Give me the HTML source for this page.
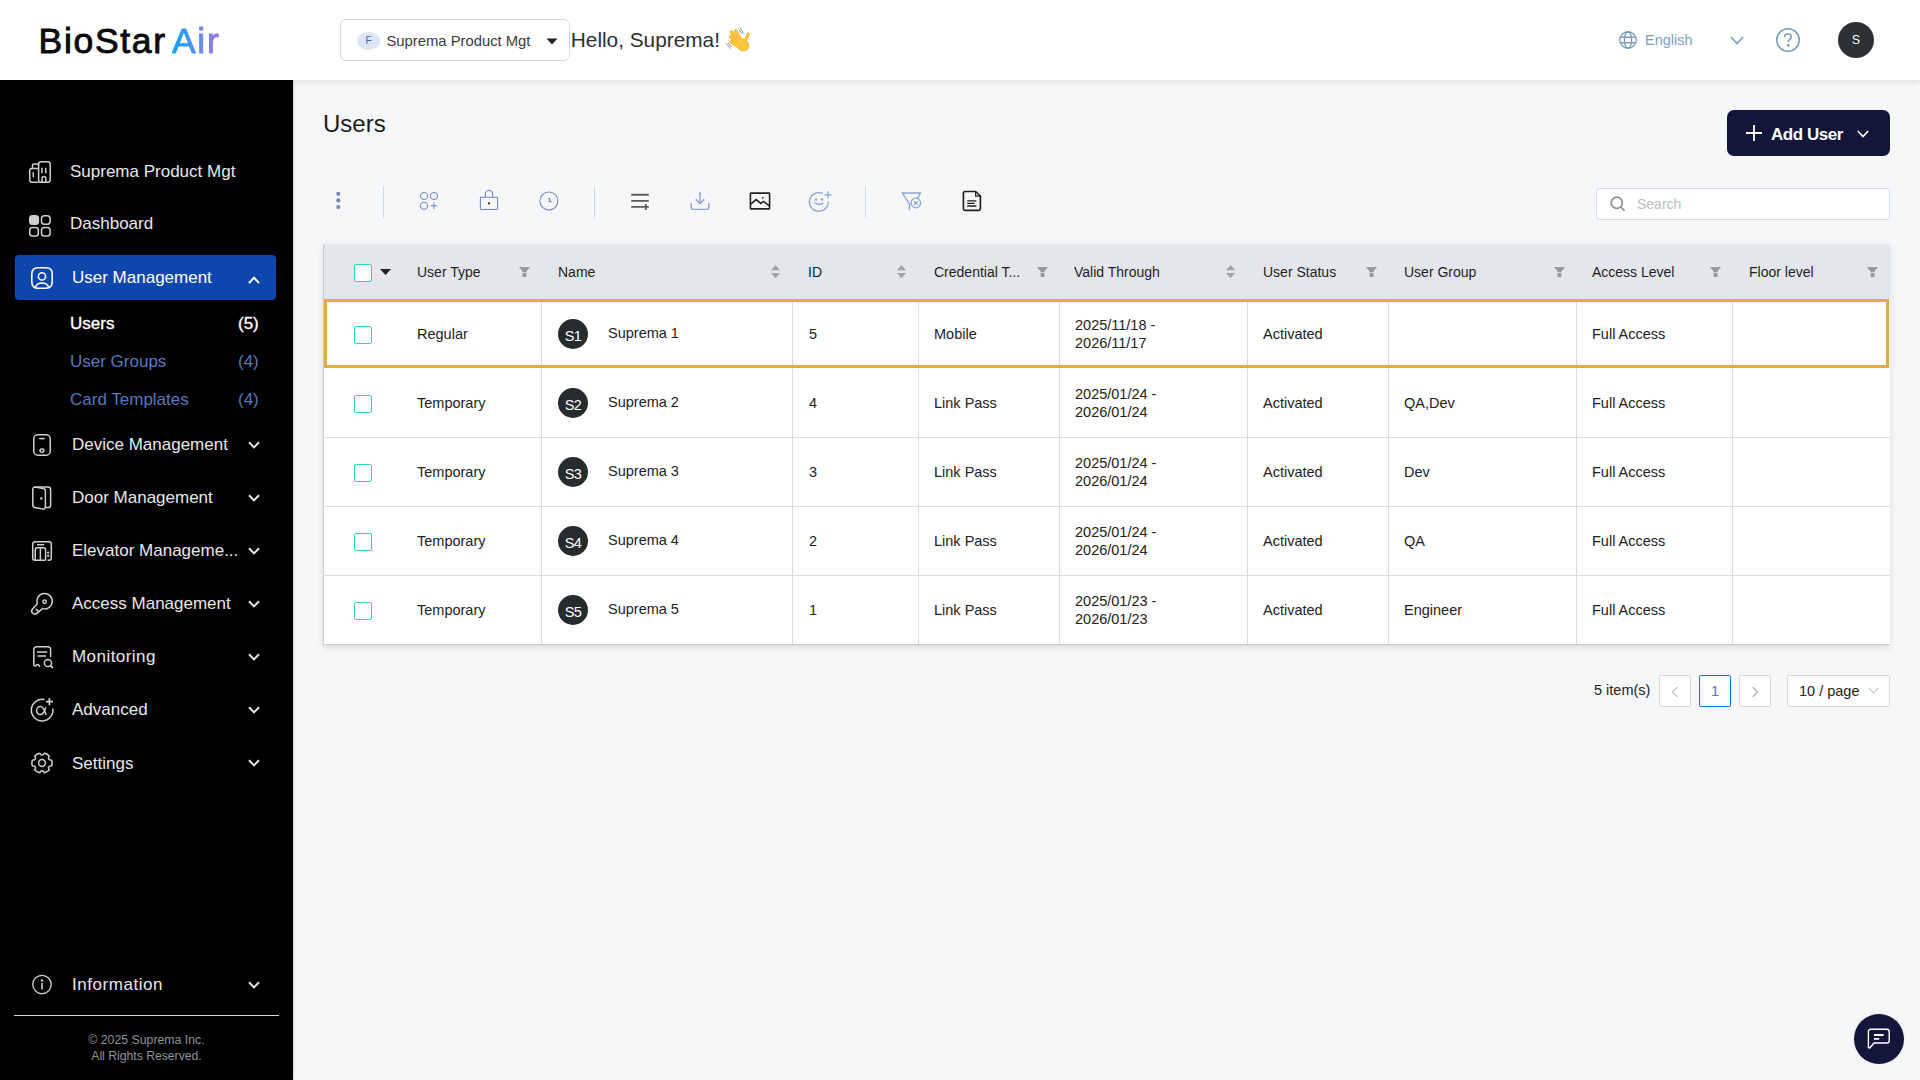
<!DOCTYPE html>
<html>
<head>
<meta charset="utf-8">
<style>
*{box-sizing:border-box;margin:0;padding:0}
html,body{width:1920px;height:1080px;overflow:hidden}
body{font-family:"Liberation Sans",sans-serif;background:#f6f7f9;position:relative;color:#222}
.abs{position:absolute}
.t{position:absolute;white-space:nowrap;line-height:1}
svg{position:absolute;overflow:visible}
/* header */
#hdr{position:absolute;left:0;top:0;width:1920px;height:80px;background:#fff;box-shadow:0 2px 6px rgba(0,0,0,.09);z-index:3}
/* sidebar */
#side{position:absolute;left:0;top:80px;width:293px;height:1000px;background:#000;z-index:2;box-shadow:1px 0 2px rgba(0,0,0,.12)}
.si{position:absolute;left:0;width:293px;height:24px}
.si .lbl{position:absolute;left:72px;top:0;font-size:17px;line-height:24px;color:#e6e6e6;white-space:nowrap}
.si svg{left:0;top:0}
.chev{position:absolute;left:248px;top:8px;width:12px;height:8px}
.sub{position:absolute;left:70px;width:190px;height:24px;font-size:17px;line-height:24px;color:#5b80cc}
.sub span{position:absolute;right:0;top:0}
/* main */
.tool{position:absolute;top:192px}
.sep{position:absolute;top:186px;width:1px;height:32px;background:#d3d8e3}
#tbl{position:absolute;left:323px;top:244px;width:1567px;height:401px;background:#fff;box-shadow:0 3px 7px rgba(0,0,0,.11);border-radius:2px 2px 0 0;overflow:hidden}
#thead{position:absolute;left:0;top:0;width:1567px;height:56px;background:#e3e6eb}
#tbl::after{content:"";position:absolute;left:0;top:0;width:1px;height:401px;background:#cbcbcb}
.th{position:absolute;top:20px;font-size:14.5px;line-height:16px;color:#1f1f1f;white-space:nowrap}
.row{position:absolute;left:0;width:1567px;height:69px;border-bottom:1px solid #d9d9d9}
.vl{position:absolute;top:56px;width:1px;height:344px;background:#d9d9d9}
.td{position:absolute;font-size:14.5px;line-height:18px;color:#222;white-space:nowrap}
.cb{position:absolute;left:32px;width:18px;height:18px;border:1.3px solid #33d3b6;border-radius:2px;background:#fff}
.av{position:absolute;left:234px;width:31px;height:31px;border-radius:50%;background:#262b2e;color:#fff;font-size:14px;line-height:31px;text-align:center}
.filt{position:absolute;top:23px;width:11px;height:10px}
.sort{position:absolute;top:20px;width:10px;height:15px}
.pg{position:absolute;top:675px;width:32px;height:32px;border:1px solid #d9d9d9;background:#fff;border-radius:2px}
</style>
</head>
<body>

<!-- HEADER -->
<div id="hdr">
  <div class="t" style="left:38.5px;top:24.3px;font-size:35.5px;line-height:35px;color:#0a0a0a;letter-spacing:1.7px;word-spacing:-4.5px;-webkit-text-stroke:0.9px #0a0a0a">BioStar <span style="background:linear-gradient(90deg,#12a4ee 0%,#3f95f0 35%,#7a82f0 70%,#9a76ec 100%);-webkit-background-clip:text;background-clip:text;color:transparent;-webkit-text-stroke:0.9px transparent">Air</span></div>

  <div class="abs" style="left:340px;top:19px;width:230px;height:42px;border:1px solid #d9d9d9;border-radius:6px;background:#fff">
    <div class="abs" style="left:16px;top:12px;width:23px;height:18px;border-radius:50%;background:#dce6f7;color:#4264b0;font-size:10px;line-height:18px;text-align:center">F</div>
    <div class="t" style="left:45.5px;top:13.7px;font-size:14.8px;color:#3a3a3a">Suprema Product Mgt</div>
    <svg style="left:205px;top:18px" width="12" height="7" viewBox="0 0 12 7"><path d="M0.5 0.5 L11.5 0.5 L6 6.5 Z" fill="#222"/></svg>
  </div>
  <div class="t" style="left:570.8px;top:29.9px;font-size:20.8px;line-height:20.8px;color:#2e2e2e">Hello, Suprema!</div>
  <!-- waving hand -->
  <svg style="left:718px;top:22px" width="40" height="36" viewBox="0 0 1200 1080">
    <g stroke-linecap="round" fill="none" stroke="#e9a524">
      <path d="M835 520 L905 370" stroke-width="100"/>
      <path d="M690 560 L530 270" stroke-width="100"/>
      <path d="M640 610 L405 300" stroke-width="100"/>
      <path d="M610 660 L375 445" stroke-width="100"/>
      <path d="M620 740 L395 600" stroke-width="100"/>
    </g>
    <ellipse cx="750" cy="690" rx="180" ry="195" transform="rotate(-35 750 690)" fill="#e9a524"/>
    <g stroke-linecap="round" fill="none" stroke="#fcc63d">
      <path d="M835 520 L905 370" stroke-width="76"/>
      <path d="M690 560 L530 270" stroke-width="76"/>
      <path d="M640 610 L405 300" stroke-width="76"/>
      <path d="M610 660 L375 445" stroke-width="76"/>
      <path d="M620 740 L395 600" stroke-width="76"/>
    </g>
    <ellipse cx="750" cy="690" rx="165" ry="180" transform="rotate(-35 750 690)" fill="#fcc63d"/>
    <g stroke="#666" stroke-width="22" stroke-linecap="round">
      <path d="M670 190 L765 330 M640 250 L715 350"/>
      <path d="M250 650 L370 790 M310 640 L400 745"/>
    </g>
  </svg>

  <!-- globe -->
  <svg style="left:1619px;top:31px" width="18" height="18" viewBox="0 0 18 18" fill="none" stroke="#7e9dbc" stroke-width="1.4">
    <circle cx="9" cy="9" r="8.2"/><ellipse cx="9" cy="9" rx="3.6" ry="8.2"/><path d="M1 6.2 H17 M1 11.8 H17"/>
  </svg>
  <div class="t" style="left:1645px;top:33px;font-size:14.5px;line-height:15px;color:#7e9dbc">English</div>
  <svg style="left:1730px;top:36px" width="14" height="9" viewBox="0 0 14 9" fill="none" stroke="#7e9dbc" stroke-width="1.8"><path d="M1 1 L7 7.5 L13 1"/></svg>
  <svg style="left:1776px;top:28px" width="24" height="24" viewBox="0 0 24 24" fill="none" stroke="#7e9dbc" stroke-width="1.6">
    <circle cx="12" cy="12" r="11.2"/><path d="M8.6 9.2 C8.6 7 10.2 6 12 6 C13.9 6 15.3 7.2 15.3 9 C15.3 11.3 12.2 11.6 12.2 14"/><circle cx="12.2" cy="17.4" r="0.6" fill="#7e9dbc"/>
  </svg>
  <div class="abs" style="left:1838px;top:22px;width:36px;height:36px;border-radius:50%;background:#2b3134;color:#fff;font-size:12.5px;line-height:36px;text-align:center">S</div>
</div>

<!-- SIDEBAR -->
<div id="side">
</div>

<!-- sidebar items (body coords) -->
<div class="abs" style="left:15px;top:255px;width:261px;height:45px;background:#0d47ad;border-radius:4px;z-index:3"></div>
<div id="sidec" style="position:absolute;left:0;top:0;z-index:4">
<!-- building -->
<svg style="left:29px;top:161px" width="22" height="22" viewBox="0 0 22 22" fill="none" stroke="#cfcfcf" stroke-width="1.5">
  <rect x="9.6" y="0.75" width="11.6" height="20.5" rx="2.6"/>
  <path d="M9.6 7.4 H3 A2.3 2.3 0 0 0 0.75 9.7 V19 A2.3 2.3 0 0 0 3 21.25 H9.6"/>
  <path d="M3.5 7.4 V4.6 A1.6 1.6 0 0 1 5.1 3 H8 A1.6 1.6 0 0 1 9.6 4.6"/>
  <path d="M4.3 11.2 V16.2 M12.9 6.8 V12.2 M16.7 6.8 V12.2 M13 21 V17.4 A1.9 1.9 0 0 1 16.8 17.4 V21"/>
</svg>
<div class="t" style="left:70px;top:162.6px;font-size:17px;color:#e8e8e8">Suprema Product Mgt</div>
<!-- dashboard -->
<svg style="left:29px;top:215px" width="22" height="22" viewBox="0 0 22 22" fill="none" stroke="#d0d0d0" stroke-width="1.5">
  <rect x="0.75" y="0.75" width="8.6" height="8.6" rx="2.8" fill="#d0d0d0"/>
  <rect x="12.5" y="0.75" width="8.6" height="8.6" rx="2.8"/>
  <rect x="0.75" y="12.5" width="8.6" height="8.6" rx="2.8"/>
  <rect x="12.5" y="12.5" width="8.6" height="8.6" rx="2.8"/>
</svg>
<div class="t" style="left:70px;top:214.6px;font-size:17px;color:#e8e8e8">Dashboard</div>
<!-- user management -->
<svg style="left:31px;top:267px" width="22" height="22" viewBox="0 0 22 22" fill="none" stroke="#fff" stroke-width="1.6">
  <path d="M7 0.8 H15 C19 0.8 21.2 3 21.2 7 V15 C21.2 19 19 21.2 15 21.2 H7 C3 21.2 0.8 19 0.8 15 V7 C0.8 3 3 0.8 7 0.8 Z"/>
  <circle cx="11" cy="9.4" r="3.6"/>
  <path d="M4.4 19.8 C5.6 17.4 8 16 11 16 C14 16 16.4 17.4 17.6 19.8"/>
</svg>
<div class="t" style="left:72px;top:268.6px;font-size:17px;color:#fff">User Management</div>
<svg style="left:248px;top:276px" width="12" height="8" viewBox="0 0 12 8" fill="none" stroke="#fff" stroke-width="2"><path d="M1 7 L6 1.8 L11 7"/></svg>
<div class="t" style="left:70px;top:314.6px;font-size:17px;color:#fff;-webkit-text-stroke:0.35px #fff">Users</div>
<div class="t" style="left:238px;top:314.6px;font-size:17px;color:#fff;-webkit-text-stroke:0.35px #fff">(5)</div>
<div class="t" style="left:70px;top:352.6px;font-size:17px;color:#5878bf">User Groups</div>
<div class="t" style="left:238px;top:352.6px;font-size:17px;color:#5878bf">(4)</div>
<div class="t" style="left:70px;top:390.6px;font-size:17px;color:#5878bf">Card Templates</div>
<div class="t" style="left:238px;top:390.6px;font-size:17px;color:#5878bf">(4)</div>
<!-- device -->
<svg style="left:33px;top:434px" width="18" height="22" viewBox="0 0 18 22" fill="none" stroke="#d0d0d0" stroke-width="1.5">
  <rect x="0.75" y="0.75" width="16.5" height="20.5" rx="4"/>
  <path d="M6.2 4.6 H11.8"/>
  <ellipse cx="9" cy="16.6" rx="1.9" ry="1.6"/>
</svg>
<div class="t" style="left:72px;top:435.6px;font-size:17px;color:#e8e8e8">Device Management</div>
<!-- door -->
<svg style="left:32px;top:486px" width="20" height="24" viewBox="0 0 20 24" fill="none" stroke="#d0d0d0" stroke-width="1.5">
  <path d="M3 1 H16 A2.6 2.6 0 0 1 18.6 3.6 V19 A2.6 2.6 0 0 1 16 21.6 H13.3"/>
  <path d="M2.8 1.1 L11.2 2.6 A2.6 2.6 0 0 1 13.4 5.2 V21 A2.2 2.2 0 0 1 10.8 23 L2.8 21.4 A2.6 2.6 0 0 1 0.8 18.8 V3.2 A2 2 0 0 1 2.8 1.1 Z"/>
  <circle cx="9.3" cy="12.4" r="0.5" fill="#d0d0d0"/>
</svg>
<div class="t" style="left:72px;top:489.3px;font-size:17px;color:#e8e8e8">Door Management</div>
<!-- elevator -->
<svg style="left:32px;top:541px" width="20" height="20" viewBox="0 0 20 20" fill="none" stroke="#d0d0d0" stroke-width="1.5">
  <path d="M15.6 19.3 H17 A2.3 2.3 0 0 0 19.3 17 V3 A2.3 2.3 0 0 0 17 0.7 H3 A2.3 2.3 0 0 0 0.7 3 V17 A2.3 2.3 0 0 0 3 19.3 H13.5"/>
  <path d="M5 3.7 H12.2"/>
  <path d="M3.2 19.3 V8.8 A2 2 0 0 1 5.2 6.8 H11.6 A2 2 0 0 1 13.6 8.8 V19.3 M8.4 6.8 V19.3"/>
  <circle cx="16.2" cy="11.6" r="0.45" fill="#d0d0d0"/><circle cx="16.2" cy="14.7" r="0.45" fill="#d0d0d0"/>
</svg>
<div class="t" style="left:72px;top:542px;font-size:17px;color:#e8e8e8">Elevator Manageme...</div>
<!-- key -->
<svg style="left:31px;top:592px" width="22" height="22" viewBox="0 0 22 22" fill="none" stroke="#cfcfcf" stroke-width="1.5" stroke-linejoin="round" stroke-linecap="round">
  <path d="M11.4 16.6 L7.4 20.1 C5.6 21.9 3.2 22.6 1.8 21.3 C0.4 20 0.4 18.2 1.5 16.9 L6.3 11.8 A7.7 7.7 0 1 1 11.4 16.6"/>
  <path d="M5.3 17.2 L7.5 19.5"/>
  <circle cx="13.6" cy="9.8" r="1.7"/>
</svg>
<div class="t" style="left:72px;top:595.1px;font-size:17px;color:#e8e8e8">Access Management</div>
<!-- monitoring -->
<svg style="left:33px;top:646px" width="22" height="22" viewBox="0 0 22 22" fill="none" stroke="#d0d0d0" stroke-width="1.5" stroke-linecap="round">
  <path d="M17.6 10.6 V3.6 A2.8 2.8 0 0 0 14.8 0.8 H3.6 A2.8 2.8 0 0 0 0.8 3.6 V18.8 A1.4 1.4 0 0 0 3 19.6 C3.8 18.2 5.6 18 6.6 20.4"/>
  <path d="M4.5 5.9 H13.7 M5 9.9 H12.5"/>
  <circle cx="14.9" cy="17" r="3.6"/><path d="M17.5 19.6 L19.6 21.6"/>
</svg>
<div class="t" style="left:72px;top:648.4px;font-size:17px;color:#e8e8e8;letter-spacing:0.45px">Monitoring</div>
<!-- advanced -->
<svg style="left:30px;top:697px" width="24" height="25" viewBox="0 0 24 25" fill="none" stroke="#d0d0d0" stroke-width="1.5">
  <path d="M14.6 2.6 A10.8 10.8 0 1 0 22.8 11.4"/>
  <path d="M19.4 1.2 V8.2 M15.9 4.7 H22.9" stroke-width="1.8"/>
  <path d="M15.8 10.4 C15 13 13.6 17.6 10.4 17.6 C8.2 17.6 6.6 15.8 6.6 13.6 C6.6 11.2 8.4 9.6 10.4 9.6 C13.4 9.6 14.8 14.8 16.4 17.8"/>
</svg>
<div class="t" style="left:72px;top:701.2px;font-size:17px;color:#e8e8e8">Advanced</div>
<!-- settings -->
<svg style="left:31px;top:752px" width="22" height="22" viewBox="0 0 22 22" fill="none" stroke="#d0d0d0" stroke-width="1.5">
  <path d="M20.71 8.22 A10.1 10.1 0 0 1 20.71 13.78 Q15.94 13.85 18.27 18.02 A10.1 10.1 0 0 1 13.44 20.80 Q11.00 16.70 8.56 20.80 A10.1 10.1 0 0 1 3.73 18.02 Q6.06 13.85 1.29 13.78 A10.1 10.1 0 0 1 1.29 8.22 Q6.06 8.15 3.73 3.98 A10.1 10.1 0 0 1 8.56 1.20 Q11.00 5.30 13.44 1.20 A10.1 10.1 0 0 1 18.27 3.98 Q15.94 8.15 20.71 8.22 Z" stroke-linejoin="round"/>
  <circle cx="11" cy="11" r="3.4"/>
</svg>
<div class="t" style="left:72px;top:754.6px;font-size:17px;color:#e8e8e8">Settings</div>

<!-- chevrons -->
<svg style="left:248px;top:441px" width="12" height="8" viewBox="0 0 12 8" fill="none" stroke="#e8e8e8" stroke-width="2"><path d="M1 1.2 L6 6.4 L11 1.2"/></svg>
<svg style="left:248px;top:494px" width="12" height="8" viewBox="0 0 12 8" fill="none" stroke="#e8e8e8" stroke-width="2"><path d="M1 1.2 L6 6.4 L11 1.2"/></svg>
<svg style="left:248px;top:547px" width="12" height="8" viewBox="0 0 12 8" fill="none" stroke="#e8e8e8" stroke-width="2"><path d="M1 1.2 L6 6.4 L11 1.2"/></svg>
<svg style="left:248px;top:600px" width="12" height="8" viewBox="0 0 12 8" fill="none" stroke="#e8e8e8" stroke-width="2"><path d="M1 1.2 L6 6.4 L11 1.2"/></svg>
<svg style="left:248px;top:653px" width="12" height="8" viewBox="0 0 12 8" fill="none" stroke="#e8e8e8" stroke-width="2"><path d="M1 1.2 L6 6.4 L11 1.2"/></svg>
<svg style="left:248px;top:706px" width="12" height="8" viewBox="0 0 12 8" fill="none" stroke="#e8e8e8" stroke-width="2"><path d="M1 1.2 L6 6.4 L11 1.2"/></svg>
<svg style="left:248px;top:759px" width="12" height="8" viewBox="0 0 12 8" fill="none" stroke="#e8e8e8" stroke-width="2"><path d="M1 1.2 L6 6.4 L11 1.2"/></svg>
<svg style="left:248px;top:981px" width="12" height="8" viewBox="0 0 12 8" fill="none" stroke="#e8e8e8" stroke-width="2"><path d="M1 1.2 L6 6.4 L11 1.2"/></svg>
<!-- info -->
<svg style="left:32px;top:975px" width="20" height="20" viewBox="0 0 20 20" fill="none" stroke="#cfcfcf" stroke-width="1.3">
  <circle cx="10" cy="9.5" r="9.2"/><path d="M10 8 V14.6" stroke-width="1.6"/><circle cx="10" cy="5.4" r="0.6" fill="#cfcfcf"/>
</svg>
<div class="t" style="left:72px;top:975.9px;font-size:17px;color:#e8e8e8;letter-spacing:0.55px">Information</div>
<div class="abs" style="left:14px;top:1014.5px;width:265px;height:1.5px;background:#d6d6d6"></div>
<div class="t" style="left:0;width:293px;text-align:center;top:1034.4px;font-size:12.3px;color:#8e939c">&copy; 2025 Suprema Inc.</div>
<div class="t" style="left:0;width:293px;text-align:center;top:1050.2px;font-size:12.2px;color:#8e939c">All Rights Reserved.</div>
</div>

<!-- MAIN -->
<div id="main" style="position:absolute;left:0;top:0;z-index:1">
<div class="t" style="left:323px;top:112.4px;font-size:24px;color:#1a1a1a">Users</div>
<div class="abs" style="left:1727px;top:110px;width:163px;height:46px;background:#13163a;border-radius:7px"></div>
<svg style="left:1746px;top:125px" width="16" height="16" viewBox="0 0 16 16" fill="none" stroke="#fff" stroke-width="1.8"><path d="M8 0 V16 M0 8 H16"/></svg>
<div class="t" style="left:1771px;top:125.6px;font-size:17px;font-weight:bold;letter-spacing:-0.45px;color:#fff">Add User</div>
<svg style="left:1857px;top:130px" width="12" height="8" viewBox="0 0 12 8" fill="none" stroke="#fff" stroke-width="1.6"><path d="M0.8 1 L6 6.6 L11.2 1"/></svg>
<div class="abs" style="left:1596px;top:188px;width:294px;height:32px;background:#fff;border:1px solid #d6daf2;border-radius:3px"></div>
<svg style="left:1610px;top:196px" width="16" height="16" viewBox="0 0 16 16" fill="none" stroke="#8a8f99" stroke-width="1.7"><circle cx="6.8" cy="6.8" r="5.6"/><path d="M11 11 L14.6 14.8"/></svg>
<div class="t" style="left:1637px;top:196.5px;font-size:14px;color:#bdbdbd">Search</div>
<svg style="left:336px;top:191px" width="5" height="19" viewBox="0 0 5 19" fill="#7389bd"><circle cx="2.3" cy="2.8" r="2.1"/><circle cx="2.3" cy="9.4" r="2.1"/><circle cx="2.3" cy="16" r="2.1"/></svg>
<div class="sep" style="left:383px"></div><div class="sep" style="left:594px"></div><div class="sep" style="left:865px"></div>
<svg style="left:419px;top:191px" width="20" height="20" viewBox="0 0 20 20" fill="none" stroke="#6f87bd" stroke-width="1.0"><circle cx="5" cy="5" r="3.6"/><circle cx="14.9" cy="5" r="3.6"/><circle cx="5" cy="14.8" r="3.6"/><path d="M14.9 11.6 V18 M11.7 14.8 H18.1"/></svg>
<svg style="left:479px;top:189px" width="20" height="22" viewBox="0 0 20 22" fill="none" stroke="#6f87bd" stroke-width="1.05"><path d="M6.4 8 V4.8 A3.6 3.6 0 0 1 13.6 4.8 V8"/><rect x="1.4" y="8.2" width="17.2" height="12.2" rx="0.8"/><circle cx="10" cy="14.3" r="1.1" fill="#222" stroke="none"/></svg>
<svg style="left:539px;top:191px" width="20" height="20" viewBox="0 0 20 20" fill="none" stroke="#6f87bd" stroke-width="1.05"><circle cx="9.9" cy="9.9" r="9"/><path d="M10.5 7 V10.6 H12.6" stroke-width="1.4"/></svg>
<svg style="left:630px;top:193px" width="20" height="18" viewBox="0 0 20 18" fill="none" stroke="#5c5c5c" stroke-width="1.9"><path d="M1.2 1.8 H18.8 M1.2 7.9 H18.8 M1.2 13.9 H13 M12.8 13.9 H18.8 M15.8 10.9 V16.9"/></svg>
<svg style="left:690px;top:191px" width="20" height="20" viewBox="0 0 20 20" fill="none" stroke="#8ea2cf" stroke-width="1.4"><path d="M10 0.8 V12.2 M5.8 8.2 L10 12.4 L14.2 8.2"/><path d="M1.2 12 V17 A1.4 1.4 0 0 0 2.6 18.4 H17.4 A1.4 1.4 0 0 0 18.8 17 V12"/></svg>
<svg style="left:749px;top:192px" width="22" height="18" viewBox="0 0 22 18" fill="none" stroke="#222" stroke-width="1.6"><rect x="1.4" y="1.1" width="19.2" height="15.8" rx="0.6"/><path d="M1.4 12.4 L7.2 7.6 L11.8 11.4 L14.6 9.4 L20.6 14.2"/><circle cx="13.7" cy="5.8" r="0.9" fill="#222" stroke="none"/></svg>
<svg style="left:808px;top:191px" width="24" height="21" viewBox="0 0 24 21" fill="none" stroke="#8ea2cf" stroke-width="1.3"><path d="M14.6 2.4 A9.4 9.4 0 1 0 20.2 10.4"/><circle cx="8" cy="8.4" r="0.6" fill="#8ea2cf"/><circle cx="14" cy="8.4" r="0.6" fill="#8ea2cf"/><path d="M6.6 11.6 C8.4 13.8 13.6 13.8 15.4 11.6"/><path d="M20 0.3 V7.4 M16.5 3.8 H23.6"/></svg>
<svg style="left:901px;top:191px" width="22" height="21" viewBox="0 0 22 21" fill="none" stroke="#8ea2cf" stroke-width="1.3"><path d="M7.6 17.8 L8.4 18.2 V13 L1.4 2 H19.4 L16.6 7.4"/><circle cx="14.8" cy="12" r="4.8"/><path d="M13.1 10.3 L16.5 13.7 M16.5 10.3 L13.1 13.7" stroke-width="1.3"/></svg>
<svg style="left:962px;top:190px" width="20" height="22" viewBox="0 0 20 22" fill="none" stroke="#222" stroke-width="1.7"><path d="M3.2 1.5 H13.6 L18.4 6.2 V18.6 A1.8 1.8 0 0 1 16.6 20.4 H3.2 A1.8 1.8 0 0 1 1.4 18.6 V3.3 A1.8 1.8 0 0 1 3.2 1.5 Z"/><path d="M13.6 1.5 V6.2 H18.4" stroke-width="1.2"/><path d="M5.2 10.8 H14.4 M5.2 13.4 H12.6 M5.2 16 H14.4" stroke-width="1.3"/></svg>
<div id="tbl"><div id="thead"></div></div>
<div class="abs" style="left:541px;top:299px;width:1px;height:345px;background:#dcdcdc"></div>
<div class="abs" style="left:792px;top:299px;width:1px;height:345px;background:#dcdcdc"></div>
<div class="abs" style="left:918px;top:299px;width:1px;height:345px;background:#dcdcdc"></div>
<div class="abs" style="left:1059px;top:299px;width:1px;height:345px;background:#dcdcdc"></div>
<div class="abs" style="left:1247px;top:299px;width:1px;height:345px;background:#dcdcdc"></div>
<div class="abs" style="left:1388px;top:299px;width:1px;height:345px;background:#dcdcdc"></div>
<div class="abs" style="left:1576px;top:299px;width:1px;height:345px;background:#dcdcdc"></div>
<div class="abs" style="left:1732px;top:299px;width:1px;height:345px;background:#dcdcdc"></div>
<div class="abs" style="left:323px;top:437px;width:1567px;height:1px;background:#dcdcdc"></div>
<div class="abs" style="left:323px;top:506px;width:1567px;height:1px;background:#dcdcdc"></div>
<div class="abs" style="left:323px;top:575px;width:1567px;height:1px;background:#dcdcdc"></div>
<div class="abs" style="left:323px;top:644px;width:1567px;height:1px;background:#cbcbcb"></div>
<div class="cb" style="left:354px;top:264px"></div>
<svg style="left:380px;top:269px" width="11" height="6" viewBox="0 0 11 6" fill="#222"><path d="M0 0 H11 L5.5 6 Z"/></svg>
<div class="t" style="left:417px;top:265.2px;font-size:14px;color:#1f1f1f">User Type</div>
<svg style="left:518.5px;top:267px" width="11" height="10" viewBox="0 0 11 10" fill="#999"><path d="M0 0 H11 L7.4 4.6 V10 H3.6 V4.6 Z"/><rect x="3.4" y="5.2" width="4.2" height="0.8" fill="#e3e6eb"/></svg>
<div class="t" style="left:558px;top:265.2px;font-size:14px;color:#1f1f1f">Name</div>
<svg style="left:771px;top:265px" width="9" height="14" viewBox="0 0 9 14" fill="#a3a3a3"><path d="M4.5 0 L9 5.2 H0 Z M0 8 H9 L4.5 13.2 Z"/></svg>
<div class="t" style="left:808px;top:265.2px;font-size:14px;color:#1f1f1f">ID</div>
<svg style="left:897px;top:265px" width="9" height="14" viewBox="0 0 9 14" fill="#a3a3a3"><path d="M4.5 0 L9 5.2 H0 Z M0 8 H9 L4.5 13.2 Z"/></svg>
<div class="t" style="left:934px;top:265.2px;font-size:14px;color:#1f1f1f">Credential T...</div>
<svg style="left:1036.5px;top:267px" width="11" height="10" viewBox="0 0 11 10" fill="#999"><path d="M0 0 H11 L7.4 4.6 V10 H3.6 V4.6 Z"/><rect x="3.4" y="5.2" width="4.2" height="0.8" fill="#e3e6eb"/></svg>
<div class="t" style="left:1074px;top:265.2px;font-size:14px;color:#1f1f1f">Valid Through</div>
<svg style="left:1226px;top:265px" width="9" height="14" viewBox="0 0 9 14" fill="#a3a3a3"><path d="M4.5 0 L9 5.2 H0 Z M0 8 H9 L4.5 13.2 Z"/></svg>
<div class="t" style="left:1263px;top:265.2px;font-size:14px;color:#1f1f1f">User Status</div>
<svg style="left:1366px;top:267px" width="11" height="10" viewBox="0 0 11 10" fill="#999"><path d="M0 0 H11 L7.4 4.6 V10 H3.6 V4.6 Z"/><rect x="3.4" y="5.2" width="4.2" height="0.8" fill="#e3e6eb"/></svg>
<div class="t" style="left:1404px;top:265.2px;font-size:14px;color:#1f1f1f">User Group</div>
<svg style="left:1554px;top:267px" width="11" height="10" viewBox="0 0 11 10" fill="#999"><path d="M0 0 H11 L7.4 4.6 V10 H3.6 V4.6 Z"/><rect x="3.4" y="5.2" width="4.2" height="0.8" fill="#e3e6eb"/></svg>
<div class="t" style="left:1592px;top:265.2px;font-size:14px;color:#1f1f1f">Access Level</div>
<svg style="left:1710px;top:267px" width="11" height="10" viewBox="0 0 11 10" fill="#999"><path d="M0 0 H11 L7.4 4.6 V10 H3.6 V4.6 Z"/><rect x="3.4" y="5.2" width="4.2" height="0.8" fill="#e3e6eb"/></svg>
<div class="t" style="left:1749px;top:265.2px;font-size:14px;color:#1f1f1f">Floor level</div>
<svg style="left:1867px;top:267px" width="11" height="10" viewBox="0 0 11 10" fill="#999"><path d="M0 0 H11 L7.4 4.6 V10 H3.6 V4.6 Z"/><rect x="3.4" y="5.2" width="4.2" height="0.8" fill="#e3e6eb"/></svg>
<div class="cb" style="left:354px;top:326.0px"></div>
<div class="t" style="left:417px;top:326.7px;font-size:14.5px;color:#222">Regular</div>
<div class="abs" style="left:558px;top:318.5px;width:30px;height:30px;border-radius:50%;background:#262b2e"></div>
<div class="t" style="left:558px;width:30px;text-align:center;top:328.8px;font-size:14.5px;color:#fff;letter-spacing:-0.6px">S1</div>
<div class="t" style="left:608px;top:325.7px;font-size:14.5px;color:#222">Suprema 1</div>
<div class="t" style="left:809px;top:326.7px;font-size:14.5px;color:#222">5</div>
<div class="t" style="left:934px;top:326.7px;font-size:14.5px;color:#222">Mobile</div>
<div class="t" style="left:1075px;top:317.7px;font-size:14.5px;color:#222">2025/11/18 -</div>
<div class="t" style="left:1075px;top:335.7px;font-size:14.5px;color:#222">2026/11/17</div>
<div class="t" style="left:1263px;top:326.7px;font-size:14.5px;color:#222">Activated</div>
<div class="t" style="left:1404px;top:326.7px;font-size:14.5px;color:#222"></div>
<div class="t" style="left:1592px;top:326.7px;font-size:14.5px;color:#222">Full Access</div>
<div class="cb" style="left:354px;top:395.0px"></div>
<div class="t" style="left:417px;top:395.7px;font-size:14.5px;color:#222">Temporary</div>
<div class="abs" style="left:558px;top:387.5px;width:30px;height:30px;border-radius:50%;background:#262b2e"></div>
<div class="t" style="left:558px;width:30px;text-align:center;top:397.8px;font-size:14.5px;color:#fff;letter-spacing:-0.6px">S2</div>
<div class="t" style="left:608px;top:394.7px;font-size:14.5px;color:#222">Suprema 2</div>
<div class="t" style="left:809px;top:395.7px;font-size:14.5px;color:#222">4</div>
<div class="t" style="left:934px;top:395.7px;font-size:14.5px;color:#222">Link Pass</div>
<div class="t" style="left:1075px;top:386.7px;font-size:14.5px;color:#222">2025/01/24 -</div>
<div class="t" style="left:1075px;top:404.7px;font-size:14.5px;color:#222">2026/01/24</div>
<div class="t" style="left:1263px;top:395.7px;font-size:14.5px;color:#222">Activated</div>
<div class="t" style="left:1404px;top:395.7px;font-size:14.5px;color:#222">QA,Dev</div>
<div class="t" style="left:1592px;top:395.7px;font-size:14.5px;color:#222">Full Access</div>
<div class="cb" style="left:354px;top:464.0px"></div>
<div class="t" style="left:417px;top:464.7px;font-size:14.5px;color:#222">Temporary</div>
<div class="abs" style="left:558px;top:456.5px;width:30px;height:30px;border-radius:50%;background:#262b2e"></div>
<div class="t" style="left:558px;width:30px;text-align:center;top:466.8px;font-size:14.5px;color:#fff;letter-spacing:-0.6px">S3</div>
<div class="t" style="left:608px;top:463.7px;font-size:14.5px;color:#222">Suprema 3</div>
<div class="t" style="left:809px;top:464.7px;font-size:14.5px;color:#222">3</div>
<div class="t" style="left:934px;top:464.7px;font-size:14.5px;color:#222">Link Pass</div>
<div class="t" style="left:1075px;top:455.7px;font-size:14.5px;color:#222">2025/01/24 -</div>
<div class="t" style="left:1075px;top:473.7px;font-size:14.5px;color:#222">2026/01/24</div>
<div class="t" style="left:1263px;top:464.7px;font-size:14.5px;color:#222">Activated</div>
<div class="t" style="left:1404px;top:464.7px;font-size:14.5px;color:#222">Dev</div>
<div class="t" style="left:1592px;top:464.7px;font-size:14.5px;color:#222">Full Access</div>
<div class="cb" style="left:354px;top:533.0px"></div>
<div class="t" style="left:417px;top:533.7px;font-size:14.5px;color:#222">Temporary</div>
<div class="abs" style="left:558px;top:525.5px;width:30px;height:30px;border-radius:50%;background:#262b2e"></div>
<div class="t" style="left:558px;width:30px;text-align:center;top:535.8px;font-size:14.5px;color:#fff;letter-spacing:-0.6px">S4</div>
<div class="t" style="left:608px;top:532.7px;font-size:14.5px;color:#222">Suprema 4</div>
<div class="t" style="left:809px;top:533.7px;font-size:14.5px;color:#222">2</div>
<div class="t" style="left:934px;top:533.7px;font-size:14.5px;color:#222">Link Pass</div>
<div class="t" style="left:1075px;top:524.7px;font-size:14.5px;color:#222">2025/01/24 -</div>
<div class="t" style="left:1075px;top:542.7px;font-size:14.5px;color:#222">2026/01/24</div>
<div class="t" style="left:1263px;top:533.7px;font-size:14.5px;color:#222">Activated</div>
<div class="t" style="left:1404px;top:533.7px;font-size:14.5px;color:#222">QA</div>
<div class="t" style="left:1592px;top:533.7px;font-size:14.5px;color:#222">Full Access</div>
<div class="cb" style="left:354px;top:602.0px"></div>
<div class="t" style="left:417px;top:602.7px;font-size:14.5px;color:#222">Temporary</div>
<div class="abs" style="left:558px;top:594.5px;width:30px;height:30px;border-radius:50%;background:#262b2e"></div>
<div class="t" style="left:558px;width:30px;text-align:center;top:604.8px;font-size:14.5px;color:#fff;letter-spacing:-0.6px">S5</div>
<div class="t" style="left:608px;top:601.7px;font-size:14.5px;color:#222">Suprema 5</div>
<div class="t" style="left:809px;top:602.7px;font-size:14.5px;color:#222">1</div>
<div class="t" style="left:934px;top:602.7px;font-size:14.5px;color:#222">Link Pass</div>
<div class="t" style="left:1075px;top:593.7px;font-size:14.5px;color:#222">2025/01/23 -</div>
<div class="t" style="left:1075px;top:611.7px;font-size:14.5px;color:#222">2026/01/23</div>
<div class="t" style="left:1263px;top:602.7px;font-size:14.5px;color:#222">Activated</div>
<div class="t" style="left:1404px;top:602.7px;font-size:14.5px;color:#222">Engineer</div>
<div class="t" style="left:1592px;top:602.7px;font-size:14.5px;color:#222">Full Access</div>
<div class="abs" style="left:324px;top:299px;width:1565px;height:69px;border:3px solid #e8a843"></div>
<div class="t" style="left:1594px;top:683px;font-size:14.5px;color:#222">5 item(s)</div>
<div class="pg" style="left:1659px"></div>
<svg style="left:1671px;top:686px" width="8" height="12" viewBox="0 0 8 12" fill="none" stroke="#c4c4c4" stroke-width="1.2"><path d="M6.5 1 L1.5 6 L6.5 11"/></svg>
<div class="pg" style="left:1699px;border-color:#1a6fe3"></div>
<div class="t" style="left:1699px;width:32px;text-align:center;top:683.5px;font-size:14.5px;color:#4e6fe0">1</div>
<div class="pg" style="left:1739px"></div>
<svg style="left:1751px;top:686px" width="8" height="12" viewBox="0 0 8 12" fill="none" stroke="#b0b0b0" stroke-width="1.2"><path d="M1.5 1 L6.5 6 L1.5 11"/></svg>
<div class="abs" style="left:1787px;top:675px;width:103px;height:32px;border:1px solid #d9d9d9;background:#fff;border-radius:2px"></div>
<div class="t" style="left:1799px;top:683.5px;font-size:14.5px;color:#222">10 / page</div>
<svg style="left:1868px;top:687px" width="11" height="7" viewBox="0 0 11 7" fill="none" stroke="#c4c4c4" stroke-width="1.1"><path d="M0.6 0.8 L5.5 6 L10.4 0.8"/></svg>
<div class="abs" style="left:1854px;top:1014px;width:50px;height:50px;border-radius:50%;background:#13163a;box-shadow:0 0 2px rgba(0,0,0,.1)"></div>
<svg style="left:1867px;top:1028px" width="24" height="22" viewBox="0 0 24 22" fill="none" stroke="#fff" stroke-width="1.4"><path d="M3.6 1.2 H19.6 A2.6 2.6 0 0 1 22.2 3.8 V12.4 A2.6 2.6 0 0 1 19.6 15 H7 L3.4 19.2 A0.9 0.9 0 0 1 1.4 18.6 V3.4 A2.2 2.2 0 0 1 3.6 1.2 Z"/><path d="M7 7 H16.6 M7 10.9 H12.2" stroke-width="1.9"/></svg>
</div>
</body>
</html>
